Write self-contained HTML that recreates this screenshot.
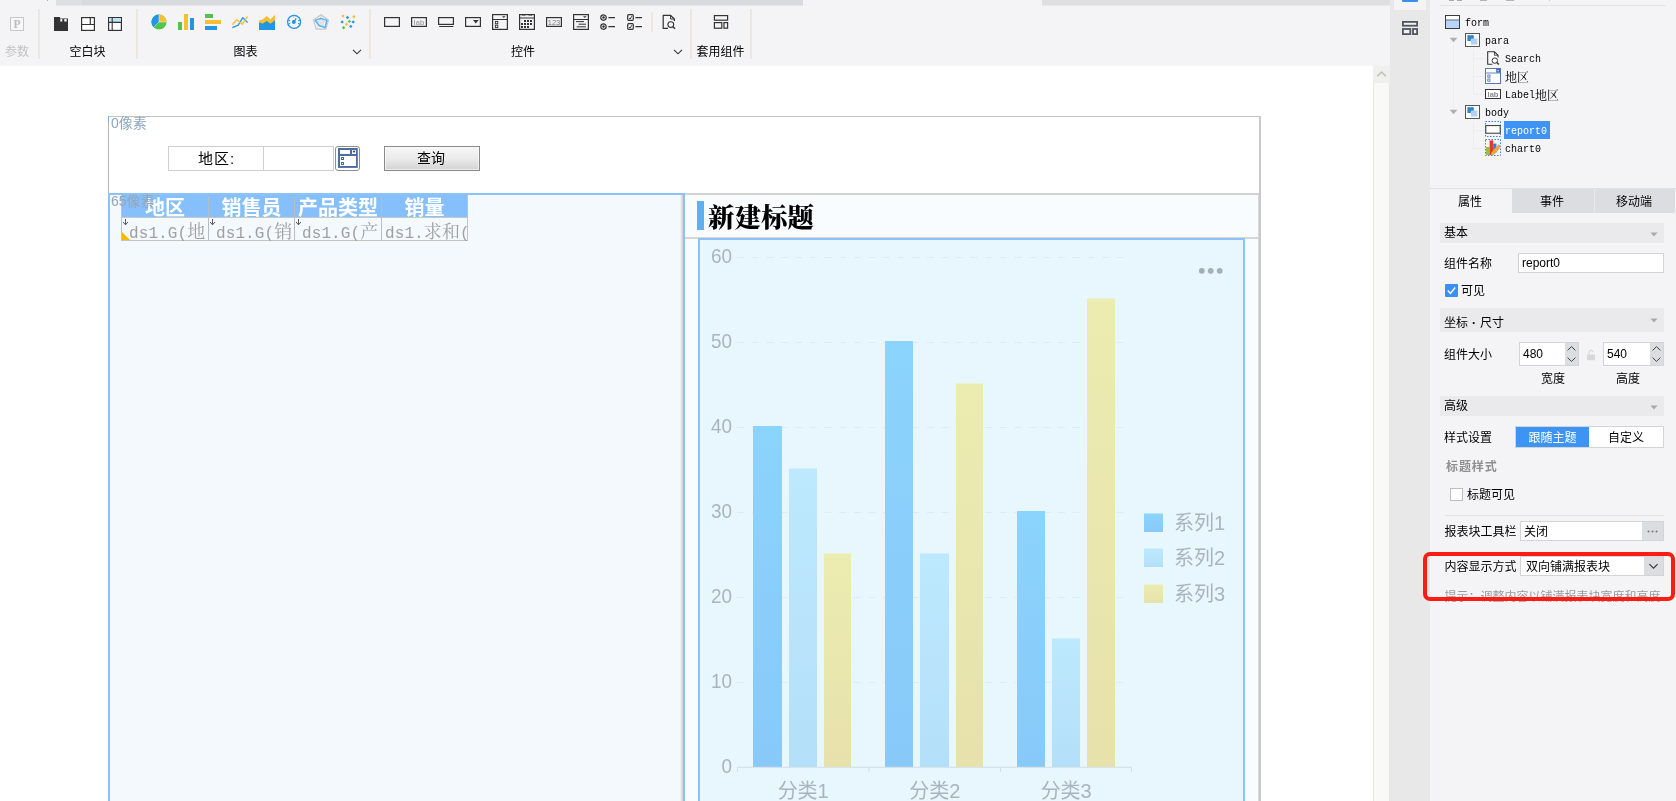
<!DOCTYPE html>
<html lang="zh-CN">
<head>
<meta charset="utf-8">
<title>FineReport 表单设计器</title>
<style>
*{box-sizing:border-box;margin:0;padding:0}
html,body{width:1676px;height:801px;overflow:hidden;background:#fff}
body{position:relative;font-family:"Liberation Sans","Noto Sans CJK SC",sans-serif;font-size:12px;color:#000}
.abs,.abs>*{position:absolute}
#app{will-change:transform;position:absolute;left:0;top:0;width:1676px;height:801px;overflow:hidden;background:#fff}
#app div,#app span,#app svg{position:absolute}
.t{white-space:nowrap;line-height:16px;height:16px;font-size:12px}
.sep{width:2px;background:linear-gradient(90deg,#ebe8d6 50%,#e8e8ea 50%)}
.simsun{font-family:"Liberation Serif","Noto Serif CJK SC",serif}
.mono{font-family:"Liberation Mono","Noto Sans CJK SC",monospace}
.hd{top:196px;height:21px;line-height:24px;font-size:20px;font-weight:bold;color:#fff;text-align:center;font-family:"Liberation Sans","Noto Sans CJK SC",sans-serif;overflow:hidden}
.cl{top:219px;height:22px;line-height:22px;font-size:16px;color:#a0a0a0;font-family:"Liberation Mono","Noto Sans CJK SC",monospace;letter-spacing:.1px}
.cl i{font-style:normal;font-size:18px;font-family:"Noto Serif CJK SC",serif}
.tr{white-space:nowrap;height:16px;line-height:16px;font-size:10px;font-family:"Liberation Mono","Noto Serif CJK SC",monospace;color:#000}
.cj{font-size:12px;font-family:"Liberation Serif","Noto Serif CJK SC",serif}
.sec{left:1440px;width:224px;background:#eaeaec}
</style>
</head>
<body>
<div id="app">
<!-- TOOLBAR -->
<div id="toolbar" style="left:0;top:0;width:1390px;height:66px;background:#f4f4f6">
  <!-- top strip -->
  <div style="left:56px;top:0;width:26px;height:6px;background:#dedfe2;border-bottom:1px solid #e9e9ec"></div>
  <div style="left:82px;top:0;width:721px;height:6px;background:#d9dadd;border-bottom:1px solid #e6e6e9"></div>
  <div style="left:1042px;top:0;width:348px;height:6px;background:#dfdfe1;border-bottom:1px solid #e9e9eb"></div>
  <div style="left:47px;top:0;width:1px;height:1px;background:#adadaf"></div>

  <!-- 参数 -->
  <svg style="left:10px;top:17px" width="14" height="14" viewBox="0 0 14 14"><rect x=".5" y=".5" width="13" height="13" fill="#f7f7f8" stroke="#c6c6c8"/><text x="7" y="11" text-anchor="middle" font-family="Liberation Serif,serif" font-weight="bold" font-size="11.5" fill="#bdbdbf">P</text></svg>
  <span class="t" style="left:5px;top:44px;color:#c3c3c5">参数</span>
  <div class="sep" style="left:38px;top:9px;height:50px"></div>

  <!-- 空白块 -->
  <svg style="left:54px;top:17px" width="14" height="14" viewBox="0 0 14 14"><path d="M0 0H6V1.4H14V14H0Z" fill="#333"/><rect x="6.3" y="2.1" width="2" height="2.4" fill="#fff"/><rect x="10.3" y="2.1" width="2.4" height="2.4" fill="#fff"/></svg>
  <svg style="left:81px;top:17px" width="14" height="14" viewBox="0 0 14 14"><rect x=".6" y=".6" width="12.8" height="12.8" fill="#fff" stroke="#333" stroke-width="1.2"/><path d="M0.6 7.5H13.4M9.3 .6V7.5" stroke="#333" stroke-width="1.2" fill="none"/></svg>
  <svg style="left:108px;top:17px" width="14" height="14" viewBox="0 0 14 14"><rect x=".6" y=".6" width="12.8" height="12.8" fill="#fff" stroke="#333" stroke-width="1.2"/><rect x="1.2" y="1.2" width="11.6" height="3.8" fill="#b7e5fb"/><path d="M0.6 5.4H13.4M4.2 .6V13.4" stroke="#333" stroke-width="1.1" fill="none"/></svg>
  <span class="t" style="left:69.5px;top:44px">空白块</span>
  <div class="sep" style="left:136px;top:9px;height:50px"></div>

  <!-- 图表 -->
  <svg style="left:151px;top:14px" width="16" height="16" viewBox="0 0 16 16"><circle cx="8" cy="8" r="7.5" fill="#52c44a"/><path d="M8 8L2.6 13.2A7.5 7.5 0 0 1 8 .5Z" fill="#2196e3"/><path d="M8 8V.5A7.5 7.5 0 0 1 15.5 8Z" fill="#f9be33"/><path d="M8 .5V8H15.5M8 8L2.6 13.2" stroke="#f4f4f6" stroke-width=".5" fill="none"/></svg>
  <svg style="left:178px;top:14px" width="16" height="16" viewBox="0 0 16 16"><rect x="0" y="8" width="4" height="8" fill="#52c44a"/><rect x="6" y="0" width="4" height="16" fill="#f9be33"/><rect x="12" y="4" width="4" height="12" fill="#2196e3"/></svg>
  <svg style="left:205px;top:14px" width="16" height="16" viewBox="0 0 16 16"><rect x="0" y="0" width="8" height="4" fill="#52c44a"/><rect x="0" y="6" width="16" height="4" fill="#f9be33"/><rect x="0" y="12" width="12" height="4" fill="#2196e3"/></svg>
  <svg style="left:232px;top:14px" width="16" height="16" viewBox="0 0 16 16"><path d="M.3 13.7L6.2 11.2L10.8 3.7L15.7 8.5" stroke="#2196e3" stroke-width="1.3" fill="none" stroke-linejoin="round"/><path d="M.3 10.7L4.9 5.7L10.3 10.3L15.5 2.3" stroke="#f9be33" stroke-width="1.3" fill="none" stroke-linejoin="round"/></svg>
  <svg style="left:259px;top:14px" width="16" height="16" viewBox="0 0 16 16"><path d="M0 6.4L3.5 5.5L7.8 2.1L11.4 5.5L16 .8V16H0Z" fill="#f9be33"/><path d="M0 8.2L3.5 9.8L7.8 7.1L11.4 9.8L16 6.2V16H0Z" fill="#2196e3"/></svg>
  <svg style="left:286px;top:14px" width="16" height="16" viewBox="0 0 16 16"><circle cx="8.1" cy="7.9" r="6.5" fill="none" stroke="#2196e3" stroke-width="1.3"/><circle cx="7.8" cy="8.1" r="2" fill="#2196e3"/><path d="M7.8 8.1L10.2 4.4" stroke="#2196e3" stroke-width="1.3"/><path d="M2.2 6.2L4.2 6.8M14 6.2L12 6.8M2.4 10L4.2 9.5M13.8 10L12 9.5" stroke="#2196e3" stroke-width="1"/><path d="M7.8 2.2V3.8" stroke="#7cc3f0" stroke-width="1"/></svg>
  <svg style="left:313px;top:14px" width="16" height="16" viewBox="0 0 16 16"><path d="M8 .7L15.5 6.2L12.7 15.2H3.3L.5 6.2Z" fill="none" stroke="#c6c6c8" stroke-width="1.2"/><path d="M8 8.6V.7M8 8.6L15.5 6.2M8 8.6L12.7 15.2M8 8.6L3.3 15.2M8 8.6L.5 6.2" stroke="#d2d2d4" stroke-width=".6"/><path d="M8 5.4L11 7.6L9.8 11.2H6.2L5 7.6Z" fill="none" stroke="#cfcfd1" stroke-width=".8"/><path d="M2.2 6.3L7.9 4.4L13.9 6.3L12 13.7L6 11.5Z" fill="none" stroke="#4db3f6" stroke-width="1.4" stroke-linejoin="round"/></svg>
  <svg style="left:340px;top:14px" width="16" height="16" viewBox="0 0 16 16"><g fill="#f9be33"><path d="M3 0.3L4.7 2L3 3.7L1.3 2Z"/><path d="M13.9 1.0L15.6 2.7L13.9 4.4L12.2 2.7Z"/><path d="M6.6 8.5L8.3 10.2L6.6 11.9L4.9 10.2Z"/></g><g fill="#2196e3"><path d="M7.5 1.8L9.2 3.5L7.5 5.2L5.8 3.5Z"/><path d="M2.1 6.2L3.8 7.9L2.1 9.6L0.4 7.9Z"/><path d="M13.2 6.2L14.9 7.9L13.2 9.6L11.5 7.9Z"/><path d="M10.8 10.7L12.5 12.4L10.8 14.1L9.1 12.4Z"/></g><g fill="#52c44a"><path d="M9.4 5.7L11.1 7.4L9.4 9.1L7.7 7.4Z"/><path d="M3.6 12.0L5.3 13.7L3.6 15.4L1.9 13.7Z"/></g></svg>
  <span class="t" style="left:233.5px;top:44px">图表</span>
  <svg style="left:352px;top:49px" width="10" height="6" viewBox="0 0 10 6"><path d="M1 .8L5 4.8L9 .8" fill="none" stroke="#333" stroke-width="1.1"/></svg>
  <div class="sep" style="left:369px;top:9px;height:50px"></div>

  <!-- 控件 -->
  <svg style="left:384px;top:17px" width="16" height="10" viewBox="0 0 16 10"><rect x=".6" y=".6" width="14.8" height="8.8" fill="none" stroke="#333" stroke-width="1.2"/></svg>
  <svg style="left:411px;top:17px" width="16" height="10" viewBox="0 0 16 10"><rect x=".6" y=".6" width="14.8" height="8.8" fill="none" stroke="#333" stroke-width="1.2"/><text x="8" y="8" text-anchor="middle" font-family="Liberation Sans,sans-serif" font-size="7.5" font-weight="bold" fill="#a9a9ab">lab</text></svg>
  <svg style="left:438px;top:17px" width="16" height="10" viewBox="0 0 16 10"><rect x=".6" y=".6" width="14.8" height="6.8" fill="none" stroke="#333" stroke-width="1.2"/><path d="M1.2 9.5H15.4" stroke="#333" stroke-width="1"/></svg>
  <svg style="left:465px;top:17px" width="16" height="10" viewBox="0 0 16 10"><rect x=".6" y=".6" width="14.8" height="8.8" fill="none" stroke="#333" stroke-width="1.2"/><path d="M8 3H13.6L10.8 6.4Z" fill="#333"/></svg>
  <svg style="left:492px;top:14px" width="16" height="16" viewBox="0 0 16 16"><rect x=".6" y=".6" width="14.8" height="14.8" fill="none" stroke="#333" stroke-width="1.2"/><path d="M.6 5.5H15.4" stroke="#333" stroke-width="1"/><path d="M10 2.2H13.6L11.8 4Z" fill="#333"/><rect x="3.4" y="7.4" width="2.4" height="2.4" fill="none" stroke="#333" stroke-width=".9"/><rect x="3.4" y="11.2" width="2.4" height="2.4" fill="none" stroke="#333" stroke-width=".9"/></svg>
  <svg style="left:519px;top:14px" width="16" height="16" viewBox="0 0 16 16"><rect x=".6" y=".6" width="14.8" height="14.8" fill="none" stroke="#333" stroke-width="1.2"/><path d="M.6 4H15.4" stroke="#333" stroke-width="1"/><path d="M3 .8H6.4M9.6 .8H13" stroke="#333" stroke-width="1.6"/><g fill="#333"><rect x="5" y="6" width="2" height="2"/><rect x="8" y="6" width="2" height="2"/><rect x="11" y="6" width="2" height="2"/><rect x="2" y="9" width="2" height="2"/><rect x="5" y="9" width="2" height="2"/><rect x="8" y="9" width="2" height="2"/><rect x="11" y="9" width="2" height="2"/><rect x="2" y="12" width="2" height="2"/><rect x="5" y="12" width="2" height="2"/><rect x="8" y="12" width="2" height="2"/></g></svg>
  <svg style="left:546px;top:17px" width="16" height="10" viewBox="0 0 16 10"><rect x=".6" y=".6" width="14.8" height="8.8" fill="none" stroke="#333" stroke-width="1.2"/><text x="8" y="8" text-anchor="middle" font-family="Liberation Sans,sans-serif" font-size="7.5" fill="#777">123</text></svg>
  <svg style="left:573px;top:14px" width="16" height="16" viewBox="0 0 16 16"><rect x=".6" y=".6" width="14.8" height="14.8" fill="none" stroke="#333" stroke-width="1.2"/><path d="M.6 5.5H15.4" stroke="#333" stroke-width="1"/><path d="M10 2.2H13.6L11.8 4Z" fill="#333"/><path d="M3 7.6H11M5.6 10.2H13M3.6 12.8H13" stroke="#333" stroke-width="1"/></svg>
  <svg style="left:600px;top:14px" width="16" height="16" viewBox="0 0 16 16"><circle cx="3.5" cy="3.6" r="2.7" fill="none" stroke="#333" stroke-width="1.2"/><circle cx="3.5" cy="3.6" r="1.25" fill="#333"/><circle cx="3.5" cy="12.6" r="2.7" fill="none" stroke="#333" stroke-width="1.2"/><circle cx="3.5" cy="12.6" r="1.25" fill="#333"/><path d="M8.4 3.6H15M8.4 12.6H15" stroke="#333" stroke-width="1.2"/></svg>
  <svg style="left:627px;top:14px" width="16" height="16" viewBox="0 0 16 16"><rect x=".7" y=".7" width="5.6" height="5.6" rx="1" fill="none" stroke="#333" stroke-width="1.2"/><path d="M2.1 4.3L3.1 5L4.9 2.2" stroke="#333" stroke-width="1" fill="none"/><rect x=".7" y="9.7" width="5.6" height="5.6" rx="1" fill="none" stroke="#333" stroke-width="1.2"/><path d="M2.1 13.3L3.1 14L4.9 11.2" stroke="#333" stroke-width="1" fill="none"/><path d="M8.4 3.6H15M8.4 12.6H15" stroke="#333" stroke-width="1.2"/></svg>
  <div class="sep" style="left:651px;top:12px;height:20px"></div>
  <svg style="left:662px;top:14px" width="15" height="16" viewBox="0 0 15 16"><path d="M6 14.4H1.2V1.4H8.6L12.4 5V7" fill="none" stroke="#333" stroke-width="1.2"/><path d="M8.6 1.4V5H12.4" fill="none" stroke="#333" stroke-width="1"/><circle cx="8.8" cy="10.6" r="2.9" fill="none" stroke="#333" stroke-width="1.1"/><path d="M10.9 12.7L13 14.8" stroke="#333" stroke-width="1.5"/></svg>
  <span class="t" style="left:511px;top:44px">控件</span>
  <svg style="left:673px;top:49px" width="10" height="6" viewBox="0 0 10 6"><path d="M1 .8L5 4.8L9 .8" fill="none" stroke="#333" stroke-width="1.1"/></svg>
  <div class="sep" style="left:690px;top:9px;height:50px"></div>

  <!-- 套用组件 -->
  <svg style="left:713px;top:14px" width="16" height="16" viewBox="0 0 16 16"><rect x="1.4" y="1.6" width="13.2" height="4.6" fill="none" stroke="#333" stroke-width="1.2"/><rect x="1.4" y="8.6" width="7.4" height="5.6" fill="none" stroke="#333" stroke-width="1.2"/><rect x="11" y="8.6" width="3.6" height="5.6" fill="none" stroke="#333" stroke-width="1.2"/></svg>
  <span class="t" style="left:696.5px;top:44px">套用组件</span>
  <div class="sep" style="left:750px;top:9px;height:50px"></div>
</div>
<!-- CANVAS -->
<div id="canvas" style="left:0;top:66px;width:1373px;height:735px;background:#fff;overflow:hidden">
  <!-- coordinates inside are page coords minus (0,66) -> use wrapper shifted -->
  <div id="cv" style="left:0;top:-66px;width:1373px;height:801px">
    <!-- outer frame -->
    <div style="left:108px;top:116px;width:1153px;height:700px;border-left:1px solid #b4b4b4;border-top:1px solid #c4c4c4"></div>
    <div style="left:1259px;top:116px;width:2px;height:700px;background:#c9c9cb"></div>
    <div style="left:108px;top:116px;width:1px;height:7px;background:#7fb0e0"></div>
    <span class="t" style="left:111px;top:115px;font-size:14px;color:#8ea6c0;line-height:17px;height:17px">0像素</span>

    <!-- para widgets -->
    <div style="left:168px;top:146px;width:96px;height:25px;border:1px solid #cfcfcf;background:#fff"></div>
    <span class="t" style="left:198px;top:149px;font-size:15px;line-height:19px;height:19px;letter-spacing:1px;font-weight:400">地区:</span>
    <div style="left:263px;top:146px;width:71px;height:25px;border:1px solid #cfcfcf;background:#fff"></div>
    <svg style="left:335px;top:146px" width="25" height="25" viewBox="0 0 25 25"><rect x=".5" y=".5" width="24" height="24" rx="2.5" fill="#fff" stroke="#8e8e8e"/><rect x="3" y="2" width="19.8" height="19.9" fill="#4a6da3"/><rect x="5" y="4" width="10" height="4" fill="#fff"/><rect x="17" y="4" width="4" height="4" fill="#fff"/><path d="M17.5 4.8H20.5L19 6.9Z" fill="#1c2a7a"/><rect x="5" y="10" width="16" height="10" fill="#fff"/><rect x="6" y="11" width="3" height="3" fill="#4a6da3"/><rect x="7" y="12" width="1" height="1" fill="#fff"/><rect x="6" y="16" width="3" height="3" fill="#4a6da3"/><rect x="7" y="17" width="1" height="1" fill="#fff"/></svg>
    <div style="left:384px;top:146px;width:96px;height:25px;border:1px solid #8a8a8a;background:linear-gradient(#f7f7f7,#ebebeb 50%,#d3d3d3);box-shadow:inset 0 0 0 1px rgba(255,255,255,.55)"></div>
    <span class="t" style="left:417px;top:149px;font-size:14px;line-height:19px;height:19px;font-weight:400">查询</span>

    <!-- report0 (selected) -->
    <div style="left:108px;top:193px;width:577px;height:640px;background:#f4f9fe;border:2px solid #8cc2fb"></div>
    <div style="left:680px;top:195px;width:3px;height:640px;background:linear-gradient(90deg,rgba(200,190,185,0),rgba(200,190,185,.8))"></div>
    <!-- table -->
    <div style="left:121px;top:195px;width:346px;height:22px;background:#86c0fc"></div>
    <div style="left:121px;top:217px;width:347px;height:24px;border:1px solid #c4c4c4;border-top-color:#c8c8c8"></div>
    <div style="left:121px;top:195px;width:1px;height:45px;background:#bfc3c8"></div>
    <div style="left:208px;top:197px;width:1px;height:43px;background:#b9bcc2"></div>
    <div style="left:294px;top:197px;width:1px;height:43px;background:#b9bcc2"></div>
    <div style="left:381px;top:197px;width:1px;height:43px;background:#b9bcc2"></div>
    <div style="left:467px;top:195px;width:1px;height:45px;background:#bfc3c8"></div>
    <span class="t hd" style="left:122px;width:86px">地区</span>
    <span class="t hd" style="left:209px;width:85px">销售员</span>
    <span class="t hd" style="left:295px;width:86px">产品类型</span>
    <span class="t hd" style="left:382px;width:85px">销量</span>
    <span class="t cl" style="left:129px">ds1.G(<i>地</i></span>
    <span class="t cl" style="left:216px">ds1.G(<i>销</i></span>
    <span class="t cl" style="left:302px">ds1.G(<i>产</i></span>
    <span class="t cl" style="left:385px">ds1.<i>求和</i>(</span>
    <svg style="left:122px;top:218px" width="10" height="22" viewBox="0 0 10 22"><path d="M0 14L8 22H0Z" fill="#fcb800"/><path d="M3.5 1V6.5M1 4L3.5 6.8L6 4" stroke="#444" stroke-width=".9" fill="none"/></svg>
    <svg style="left:209px;top:218px" width="10" height="10" viewBox="0 0 10 10"><path d="M3.5 1V6.5M1 4L3.5 6.8L6 4" stroke="#444" stroke-width=".9" fill="none"/></svg>
    <svg style="left:295px;top:218px" width="10" height="10" viewBox="0 0 10 10"><path d="M3.5 1V6.5M1 4L3.5 6.8L6 4" stroke="#444" stroke-width=".9" fill="none"/></svg>
    <span class="t" style="left:111px;top:193px;font-size:14px;color:#92a5b9;line-height:17px;height:17px">65像素</span>
    <!-- handle -->
    <div style="left:685px;top:514px;width:6px;height:7px;background:#fff;border:1px solid #7f9ab8;border-left:none"></div>

    <!-- chart0 -->
    <div id="chartblock" style="left:685px;top:193px;width:574px;height:640px;background:#f9fcfe;border-top:2px solid #d2d2d3;border-right:1px solid #d8d8d9"></div>
    <div style="left:685px;top:237px;width:573px;height:2px;background:#d6d6d7"></div>
    <div style="left:697px;top:201px;width:7px;height:29px;background:#62afee"></div>
    <span class="t" style="left:708px;top:200.5px;font-size:26.5px;line-height:34px;height:34px;font-weight:900;font-family:'Liberation Sans','Noto Serif CJK SC',serif">新建标题</span>
    <div id="chart" style="left:698px;top:238px;width:547px;height:600px;background:#e8f6fe;border:2px solid #8cc2fb"></div>
    <svg id="chartsvg" style="left:700px;top:240px" width="543" height="561" viewBox="700 240 543 561" font-family="Liberation Sans,Noto Sans CJK SC,sans-serif">
    <defs><linearGradient id="g1" x1="0" y1="0" x2="0" y2="1"><stop offset="0" stop-color="#8bd4fd"/><stop offset="1" stop-color="#88c9f8"/></linearGradient><linearGradient id="g2" x1="0" y1="0" x2="0" y2="1"><stop offset="0" stop-color="#bde9fe"/><stop offset="1" stop-color="#b4dff9"/></linearGradient><linearGradient id="g3" x1="0" y1="0" x2="0" y2="1"><stop offset="0" stop-color="#ebecb0"/><stop offset="1" stop-color="#e7e1ac"/></linearGradient></defs>
    <path d="M737 682.5H1132" stroke="#ddebf3" stroke-width="1" stroke-dasharray="7 7.6" fill="none"/>
    <path d="M737 597.5H1132" stroke="#ddebf3" stroke-width="1" stroke-dasharray="7 7.6" fill="none"/>
    <path d="M737 512.5H1132" stroke="#ddebf3" stroke-width="1" stroke-dasharray="7 7.6" fill="none"/>
    <path d="M737 427.5H1132" stroke="#ddebf3" stroke-width="1" stroke-dasharray="7 7.6" fill="none"/>
    <path d="M737 342.5H1132" stroke="#ddebf3" stroke-width="1" stroke-dasharray="7 7.6" fill="none"/>
    <path d="M737 257.5H1132" stroke="#ddebf3" stroke-width="1" stroke-dasharray="7 7.6" fill="none"/>
    <text x="732" y="772.8" text-anchor="end" font-size="21" textLength="10.5" lengthAdjust="spacingAndGlyphs" fill="#a8b5be">0</text>
    <text x="732" y="687.8" text-anchor="end" font-size="21" textLength="21.0" lengthAdjust="spacingAndGlyphs" fill="#a8b5be">10</text>
    <text x="732" y="602.8" text-anchor="end" font-size="21" textLength="21.0" lengthAdjust="spacingAndGlyphs" fill="#a8b5be">20</text>
    <text x="732" y="517.8" text-anchor="end" font-size="21" textLength="21.0" lengthAdjust="spacingAndGlyphs" fill="#a8b5be">30</text>
    <text x="732" y="432.8" text-anchor="end" font-size="21" textLength="21.0" lengthAdjust="spacingAndGlyphs" fill="#a8b5be">40</text>
    <text x="732" y="347.8" text-anchor="end" font-size="21" textLength="21.0" lengthAdjust="spacingAndGlyphs" fill="#a8b5be">50</text>
    <text x="732" y="262.8" text-anchor="end" font-size="21" textLength="21.0" lengthAdjust="spacingAndGlyphs" fill="#a8b5be">60</text>
    <rect x="753" y="426.0" width="29" height="341.0" fill="url(#g1)"/>
    <rect x="789" y="468.5" width="28" height="298.5" fill="url(#g2)"/>
    <rect x="824" y="553.5" width="27" height="213.5" fill="url(#g3)"/>
    <rect x="885" y="341.0" width="28" height="426.0" fill="url(#g1)"/>
    <rect x="920" y="553.5" width="29" height="213.5" fill="url(#g2)"/>
    <rect x="956" y="383.5" width="27" height="383.5" fill="url(#g3)"/>
    <rect x="1017" y="511.0" width="28" height="256.0" fill="url(#g1)"/>
    <rect x="1052" y="638.5" width="28" height="128.5" fill="url(#g2)"/>
    <rect x="1087" y="298.5" width="28" height="468.5" fill="url(#g3)"/>
    <path d="M737.5 772V767.3H1132" stroke="#d3dfe6" stroke-width="1" fill="none"/>
    <path d="M869 767V772M1000.5 767V772M1131.5 767V772" stroke="#d3dfe6" stroke-width="1" fill="none"/>
    <text x="803.2" y="798" text-anchor="middle" font-size="20" fill="#a8b5be">分类1</text>
    <text x="934.8" y="798" text-anchor="middle" font-size="20" fill="#a8b5be">分类2</text>
    <text x="1066.2" y="798" text-anchor="middle" font-size="20" fill="#a8b5be">分类3</text>
    <rect x="1144" y="513.5" width="19" height="18.5" fill="url(#g1)"/>
    <text x="1174" y="529.5" font-size="20" fill="#a8b5be">系列1</text>
    <rect x="1144" y="548.5" width="19" height="18.5" fill="url(#g2)"/>
    <text x="1174" y="564.5" font-size="20" fill="#a8b5be">系列2</text>
    <rect x="1144" y="584.5" width="19" height="18.5" fill="url(#g3)"/>
    <text x="1174" y="600.5" font-size="20" fill="#a8b5be">系列3</text>
    <circle cx="1201.8" cy="270.8" r="2.9" fill="#a3aeb6"/>
    <circle cx="1210.7" cy="270.8" r="2.9" fill="#a3aeb6"/>
    <circle cx="1219.7" cy="270.8" r="2.9" fill="#a3aeb6"/>
    </svg>
  </div>
</div>
<!-- SCROLLBAR -->
<div id="vscroll" style="left:1373px;top:66px;width:17px;height:735px;background:#f9f9f7;border-left:1px solid #e8e6dc;border-right:1px solid #e8e6dc"><div style="left:-1px;top:0;width:17px;height:17px;background:#efefec"></div><svg style="left:2px;top:4px" width="11" height="8" viewBox="0 0 11 8"><path d="M1.2 6.2L5.5 2L9.8 6.2" fill="none" stroke="#bdbdbd" stroke-width="1.5"/></svg></div>
<!-- SIDE STRIP + PANEL -->
<div id="strip" style="left:1390px;top:0;width:40px;height:801px;background:#e8e8e8">
  <div style="left:4px;top:0;width:32px;height:10px;background:#f4f4f6"></div>
  <div style="left:12px;top:0;width:16px;height:2px;background:#3a8ff5;border-radius:0 0 1px 1px"></div>
  <svg style="left:12px;top:21px" width="16" height="14" viewBox="0 0 16 14"><rect x=".9" y=".9" width="14.2" height="3.8" fill="#f2f2f3" stroke="#54565f" stroke-width="1.8"/><rect x=".9" y="8" width="7.4" height="5.1" fill="#f2f2f3" stroke="#54565f" stroke-width="1.8"/><rect x="11" y="8" width="4.1" height="5.1" fill="#f2f2f3" stroke="#54565f" stroke-width="1.8"/></svg>
</div>
<div id="panel" style="left:1430px;top:0;width:246px;height:801px;background:#f4f4f6;overflow:hidden">
 <div id="pv" style="left:-1430px;top:0;width:1676px;height:801px">
  <!-- top remnants -->
  <div style="left:1440px;top:5px;width:226px;height:1px;background:#e2e2e4"></div>
  <div style="left:1449px;top:0;width:5px;height:1px;background:#a8a8aa"></div><div style="left:1457px;top:0;width:5px;height:1px;background:#a8a8aa"></div>
  <div style="left:1480px;top:0;width:7px;height:1px;background:#b4b4b6"></div>
  <div style="left:1506px;top:0;width:8px;height:1px;background:#b4b4b6"></div>
  <div style="left:1549px;top:0;width:1px;height:1px;background:#c8c8ca"></div>

  <!-- tree -->
  <div style="left:1453px;top:30px;width:1px;height:80px;background:#ededef"></div>
  <div style="left:1473px;top:50px;width:1px;height:44px;background:#ededef"></div>
  <div style="left:1473px;top:58px;width:12px;height:1px;background:#ededef"></div>
  <div style="left:1473px;top:76px;width:12px;height:1px;background:#ededef"></div>
  <div style="left:1473px;top:94px;width:12px;height:1px;background:#ededef"></div>
  <div style="left:1473px;top:122px;width:1px;height:26px;background:#ededef"></div>
  <div style="left:1473px;top:130px;width:12px;height:1px;background:#ededef"></div>
  <div style="left:1473px;top:148px;width:12px;height:1px;background:#ededef"></div>

  <svg style="left:1445px;top:15px" width="15" height="14" viewBox="0 0 15 14"><rect x=".5" y=".5" width="14" height="13" fill="#b9d4f8" stroke="#3c3c3c"/><rect x="1" y="1" width="13" height="3.6" fill="#fff"/><path d="M.5 5H14.5" stroke="#555" stroke-width=".8"/></svg>
  <span class="tr" style="left:1465px;top:16px">form</span>

  <svg style="left:1449px;top:37px" width="9" height="6" viewBox="0 0 9 6"><path d="M.6 .8H8.4L4.5 5.2Z" fill="#b0b0b2"/></svg>
  <svg class="ic" style="left:1465px;top:33px" width="15" height="14" viewBox="0 0 15 14"><rect x=".5" y=".5" width="14" height="13" fill="#fff" stroke="#555"/><rect x="2.4" y="2.2" width="6.4" height="5.8" fill="#2f86c8"/><rect x="5.8" y="5.6" width="6.6" height="6" fill="#b4d1f4"/></svg>
  <span class="tr" style="left:1485px;top:34px">para</span>

  <svg style="left:1487px;top:51px" width="13" height="15" viewBox="0 0 13 15"><path d="M5.4 13.2H.7V.8H7.4L11 4.2V6.4" fill="#fff" stroke="#333" stroke-width="1.1"/><path d="M7.4 .8V4.2H11" fill="none" stroke="#333" stroke-width=".9"/><circle cx="7.8" cy="9.6" r="2.7" fill="#fff" stroke="#333" stroke-width="1"/><path d="M9.8 11.6L11.8 13.6" stroke="#333" stroke-width="1.4"/></svg>
  <span class="tr" style="left:1505px;top:52px">Search</span>

  <svg style="left:1485px;top:68px" width="16" height="16" viewBox="0 0 16 16"><rect x=".5" y=".5" width="15" height="15" fill="#fff" stroke="#5577ba" stroke-width="1"/><path d="M.5 5H15.5" stroke="#5577ba" stroke-width=".9"/><rect x="11.2" y="1" width="3.8" height="3.6" fill="#3f62a8"/><path d="M12 2.2H14.2L13.1 3.7Z" fill="#fff"/><rect x="2.8" y="7" width="2.2" height="2.2" fill="#fff" stroke="#4668b0" stroke-width=".8"/><rect x="2.8" y="11" width="2.2" height="2.2" fill="#fff" stroke="#4668b0" stroke-width=".8"/></svg>
  <span class="tr cj" style="left:1505px;top:69.5px">地区</span>

  <svg style="left:1485px;top:89px" width="16" height="10" viewBox="0 0 16 10"><rect x=".5" y=".5" width="15" height="9" fill="#fff" stroke="#333"/><text x="8" y="7.8" text-anchor="middle" font-family="Liberation Sans,sans-serif" font-size="7.5" font-weight="bold" fill="#88888a">lab</text></svg>
  <span class="tr" style="left:1505px;top:88px">Label</span><span class="tr cj" style="left:1535px;top:87.5px">地区</span>

  <svg style="left:1449px;top:109px" width="9" height="6" viewBox="0 0 9 6"><path d="M.6 .8H8.4L4.5 5.2Z" fill="#b0b0b2"/></svg>
  <svg style="left:1465px;top:105px" width="15" height="14" viewBox="0 0 15 14"><rect x=".5" y=".5" width="14" height="13" fill="#fff" stroke="#555"/><rect x="2.4" y="2.2" width="6.4" height="5.8" fill="#2f86c8"/><rect x="5.8" y="5.6" width="6.6" height="6" fill="#b4d1f4"/></svg>
  <span class="tr" style="left:1485px;top:106px">body</span>

  <div style="left:1504px;top:121px;width:46px;height:18px;background:#3d94f5"></div>
  <svg style="left:1485px;top:121px" width="16" height="16" viewBox="0 0 16 16"><rect x=".5" y=".5" width="15" height="15" fill="none" stroke="#3b84d8" stroke-dasharray="1.5 1.5"/><rect x=".8" y="4.6" width="14.4" height="7.6" fill="#fff" stroke="#333" stroke-width="1"/></svg>
  <span class="tr" style="left:1505px;top:124px;color:#fff">report0</span>

  <svg style="left:1485px;top:139px" width="16" height="17" viewBox="0 0 16 17"><rect x=".5" y=".5" width="15" height="16" fill="none" stroke="#3b84d8" stroke-dasharray="1.5 1.5"/><rect x="1" y="8" width="3.6" height="8" fill="#9bbf3b"/><rect x="4.6" y="1.4" width="3.6" height="14.6" fill="#e23b2e"/><rect x="8.2" y="4.6" width="3.2" height="9" fill="#2f7fd0"/><path d="M6.6 13.2L12.4 6.6L15 9L9.2 15.4L5.8 16.2Z" fill="#f0a63a"/><path d="M12.4 6.6L13.6 5.2L16 7.6L15 9Z" fill="#f08c78"/></svg>
  <span class="tr" style="left:1505px;top:142px">chart0</span>

  <!-- tabs -->
  <div style="left:1430px;top:188px;width:246px;height:1px;background:#e0e0e3"></div>
  <div style="left:1512px;top:189px;width:82px;height:24px;background:#dcdde0"></div>
  <div style="left:1594px;top:189px;width:81px;height:24px;background:#dcdde0;border-left:1px solid #e8e8ea"></div>
  <span class="t" style="left:1429px;top:193.5px;width:82px;text-align:center">属性</span>
  <span class="t" style="left:1511px;top:193.5px;width:82px;text-align:center">事件</span>
  <span class="t" style="left:1593px;top:193.5px;width:82px;text-align:center">移动端</span>

  <!-- 基本 -->
  <div class="sec" style="top:223px;height:20px"></div>
  <span class="t" style="left:1444px;top:225px">基本</span>
  <svg style="left:1650px;top:232px" width="8" height="5" viewBox="0 0 8 5"><path d="M.4 .4H7.6L4 4.6Z" fill="#a9a9ab"/></svg>
  <span class="t" style="left:1444px;top:256px">组件名称</span>
  <div style="left:1518px;top:253px;width:146px;height:20px;background:#fff;border:1px solid #d4d4d6"></div>
  <span class="t" style="left:1522px;top:255px">report0</span>
  <svg style="left:1445px;top:284px" width="13" height="13" viewBox="0 0 13 13"><rect width="13" height="13" rx="1" fill="#3a8ff5"/><path d="M2.8 6.6L5.4 9.4L10.2 3.6" fill="none" stroke="#fff" stroke-width="1.5"/></svg>
  <span class="t" style="left:1461px;top:283px">可见</span>

  <!-- 坐标·尺寸 -->
  <div class="sec" style="top:308px;height:24px"></div>
  <span class="t" style="left:1444px;top:314.5px">坐标<i style="display:inline-block;width:12px;text-align:center;font-style:normal;font-weight:bold">·</i>尺寸</span>
  <svg style="left:1650px;top:318px" width="8" height="5" viewBox="0 0 8 5"><path d="M.4 .4H7.6L4 4.6Z" fill="#a9a9ab"/></svg>
  <span class="t" style="left:1444px;top:347px">组件大小</span>
  <div style="left:1519px;top:342px;width:60px;height:24px;background:#fff;border:1px solid #d4d4d6"></div>
  <div style="left:1565px;top:343px;width:13px;height:22px;background:#dcdde0"></div>
  <svg style="left:1566px;top:345px" width="11" height="18" viewBox="0 0 11 18"><path d="M1.6 5.4L5.5 1.6L9.4 5.4M1.6 12.6L5.5 16.4L9.4 12.6" fill="none" stroke="#444" stroke-width="1"/></svg>
  <span class="t" style="left:1523px;top:346px">480</span>
  <svg style="left:1586px;top:349px" width="10" height="12" viewBox="0 0 10 12"><rect x="1" y="5.6" width="8" height="5.6" rx=".6" fill="#d8d8da"/><path d="M3 5.6V3.4A2 2 0 0 1 7 3.4" fill="none" stroke="#d8d8da" stroke-width="1.1"/></svg>
  <div style="left:1603px;top:342px;width:61px;height:24px;background:#fff;border:1px solid #d4d4d6"></div>
  <div style="left:1650px;top:343px;width:13px;height:22px;background:#dcdde0"></div>
  <svg style="left:1651px;top:345px" width="11" height="18" viewBox="0 0 11 18"><path d="M1.6 5.4L5.5 1.6L9.4 5.4M1.6 12.6L5.5 16.4L9.4 12.6" fill="none" stroke="#444" stroke-width="1"/></svg>
  <span class="t" style="left:1607px;top:346px">540</span>
  <span class="t" style="left:1541px;top:371px">宽度</span>
  <span class="t" style="left:1616px;top:371px">高度</span>

  <!-- 高级 -->
  <div class="sec" style="top:396px;height:20px"></div>
  <span class="t" style="left:1444px;top:398px">高级</span>
  <svg style="left:1650px;top:405px" width="8" height="5" viewBox="0 0 8 5"><path d="M.4 .4H7.6L4 4.6Z" fill="#a9a9ab"/></svg>
  <span class="t" style="left:1444px;top:430px">样式设置</span>
  <div style="left:1515px;top:426px;width:149px;height:22px;background:#fff;border:1px solid #d4d4d6"></div>
  <div style="left:1516px;top:427px;width:73px;height:20px;background:#3d94f5"></div>
  <span class="t" style="left:1516px;top:430px;width:73px;text-align:center;color:#fff">跟随主题</span>
  <span class="t" style="left:1589px;top:430px;width:74px;text-align:center">自定义</span>
  <span class="t" style="left:1446px;top:458.5px;color:#8f8f91;font-weight:bold;letter-spacing:.9px">标题样式</span>
  <div style="left:1450px;top:488px;width:13px;height:13px;background:#fff;border:1px solid #bdbdbf"></div>
  <span class="t" style="left:1467px;top:487px">标题可见</span>
  <div style="left:1445px;top:515px;width:219px;height:1px;background:#e2e2e4"></div>
  <span class="t" style="left:1444.5px;top:524px">报表块工具栏</span>
  <div style="left:1520px;top:521px;width:144px;height:20px;background:#fff;border:1px solid #d4d4d6"></div>
  <span class="t" style="left:1524px;top:524px">关闭</span>
  <div style="left:1642px;top:522px;width:21px;height:18px;background:#dcdde0"></div>
  <svg style="left:1647px;top:530px" width="11" height="3" viewBox="0 0 11 3"><circle cx="1.5" cy="1.5" r="1" fill="#777"/><circle cx="5.5" cy="1.5" r="1" fill="#777"/><circle cx="9.5" cy="1.5" r="1" fill="#777"/></svg>

  <span class="t" style="left:1444.5px;top:559px">内容显示方式</span>
  <div style="left:1520px;top:556px;width:144px;height:20px;background:#fff;border:1px solid #d4d4d6"></div>
  <span class="t" style="left:1526px;top:559px">双向铺满报表块</span>
  <div style="left:1644px;top:557px;width:19px;height:18px;background:#dcdde0"></div>
  <svg style="left:1648px;top:563px" width="11" height="7" viewBox="0 0 11 7"><path d="M1.4 1.2L5.5 5.2L9.6 1.2" fill="none" stroke="#333" stroke-width="1.1"/></svg>
  <div style="left:1440px;top:585px;width:230px;height:20px;overflow:hidden"><span class="t" style="left:4.5px;top:3.5px;color:#9a9a9c">提示：调整内容以铺满报表块宽度和高度</span></div>
 </div>
</div>
<div style="left:1423.3px;top:552.2px;width:251.6px;height:49.3px;border:4px solid #fb1d14;border-radius:7px"></div>
</div>
</body>
</html>
